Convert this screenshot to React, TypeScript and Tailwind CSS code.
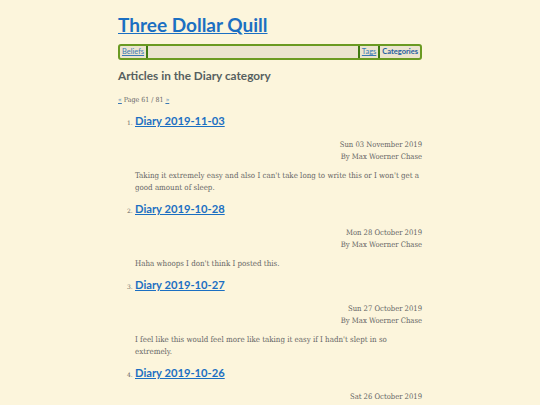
import React from "react";

const posts = [
  { n: 1, title: "Diary 2019-11-03", date: "Sun 03 November 2019", summary: "Taking it extremely easy and also I can't take long to write this or I won't get a good amount of sleep." },
  { n: 2, title: "Diary 2019-10-28", date: "Mon 28 October 2019", summary: "Haha whoops I don't think I posted this." },
  { n: 3, title: "Diary 2019-10-27", date: "Sun 27 October 2019", summary: "I feel like this would feel more like taking it easy if I hadn't slept in so extremely." },
  { n: 4, title: "Diary 2019-10-26", date: "Sat 26 October 2019", summary: "" },
];

const head = { fontFamily: "Lato, 'Open Sans', sans-serif" };
const body = { fontFamily: "'DejaVu Serif', serif" };

export default function App() {
  return (
    <div className="min-h-[405px] w-full bg-[#fcf5dc] text-[#555]" style={body}>
      <div className="mx-auto w-[304px] pt-[14px]">
        <h1 className="text-[19px] font-bold leading-[22px] text-[#1b6fc2] underline" style={head}>
          Three Dollar Quill
        </h1>
        <nav className="mt-[8px] flex h-[16px] items-stretch rounded-[3px] border-2 border-[#6a9a22] bg-[#ebe4cf] text-[7.5px] leading-[12px]" style={head}>
          <a className="border-r-2 border-[#3f7a12] px-[2px] text-[#3a78b5] underline">Beliefs</a>
          <div className="flex-1" />
          <a className="border-x-2 border-[#3f7a12] px-[2px] text-[#3a78b5] underline">Tags</a>
          <a className="px-[2px] font-bold text-[#1f5e9e]">Categories</a>
        </nav>
        <h2 className="mt-[7px] text-[11.8px] font-bold leading-[18px] text-[#566060]" style={head}>
          Articles in the Diary category
        </h2>
        <p className="mt-[10px] text-[7px] leading-[10px] text-[#666] font-stretch-condensed">
          <a className="text-[#3a78b5] underline">«</a> Page 61 / 81 <a className="text-[#3a78b5] underline">»</a>
        </p>
        <ol className="mt-[7px] pl-[17px]">
          {posts.map((p) => (
            <li key={p.n} className="mb-[6px]">
              <div className="flex items-baseline">
                <span className="-ml-[8px] w-[8px] text-[6px] text-[#666]">{p.n}.</span>
                <a className="text-[11.2px] font-bold leading-[18px] text-[#1b6fc2] underline" style={head}>
                  {p.title}
                </a>
              </div>
              <div className="mt-[9px] text-right text-[7.6px] leading-[12px] text-[#666] font-stretch-condensed">
                <div>{p.date}</div>
                <div>By Max Woerner Chase</div>
              </div>
              {p.summary && (
                <p className="mt-[7px] text-[7.9px] leading-[12px] text-[#666] font-stretch-condensed">{p.summary}</p>
              )}
            </li>
          ))}
        </ol>
      </div>
    </div>
  );
}
